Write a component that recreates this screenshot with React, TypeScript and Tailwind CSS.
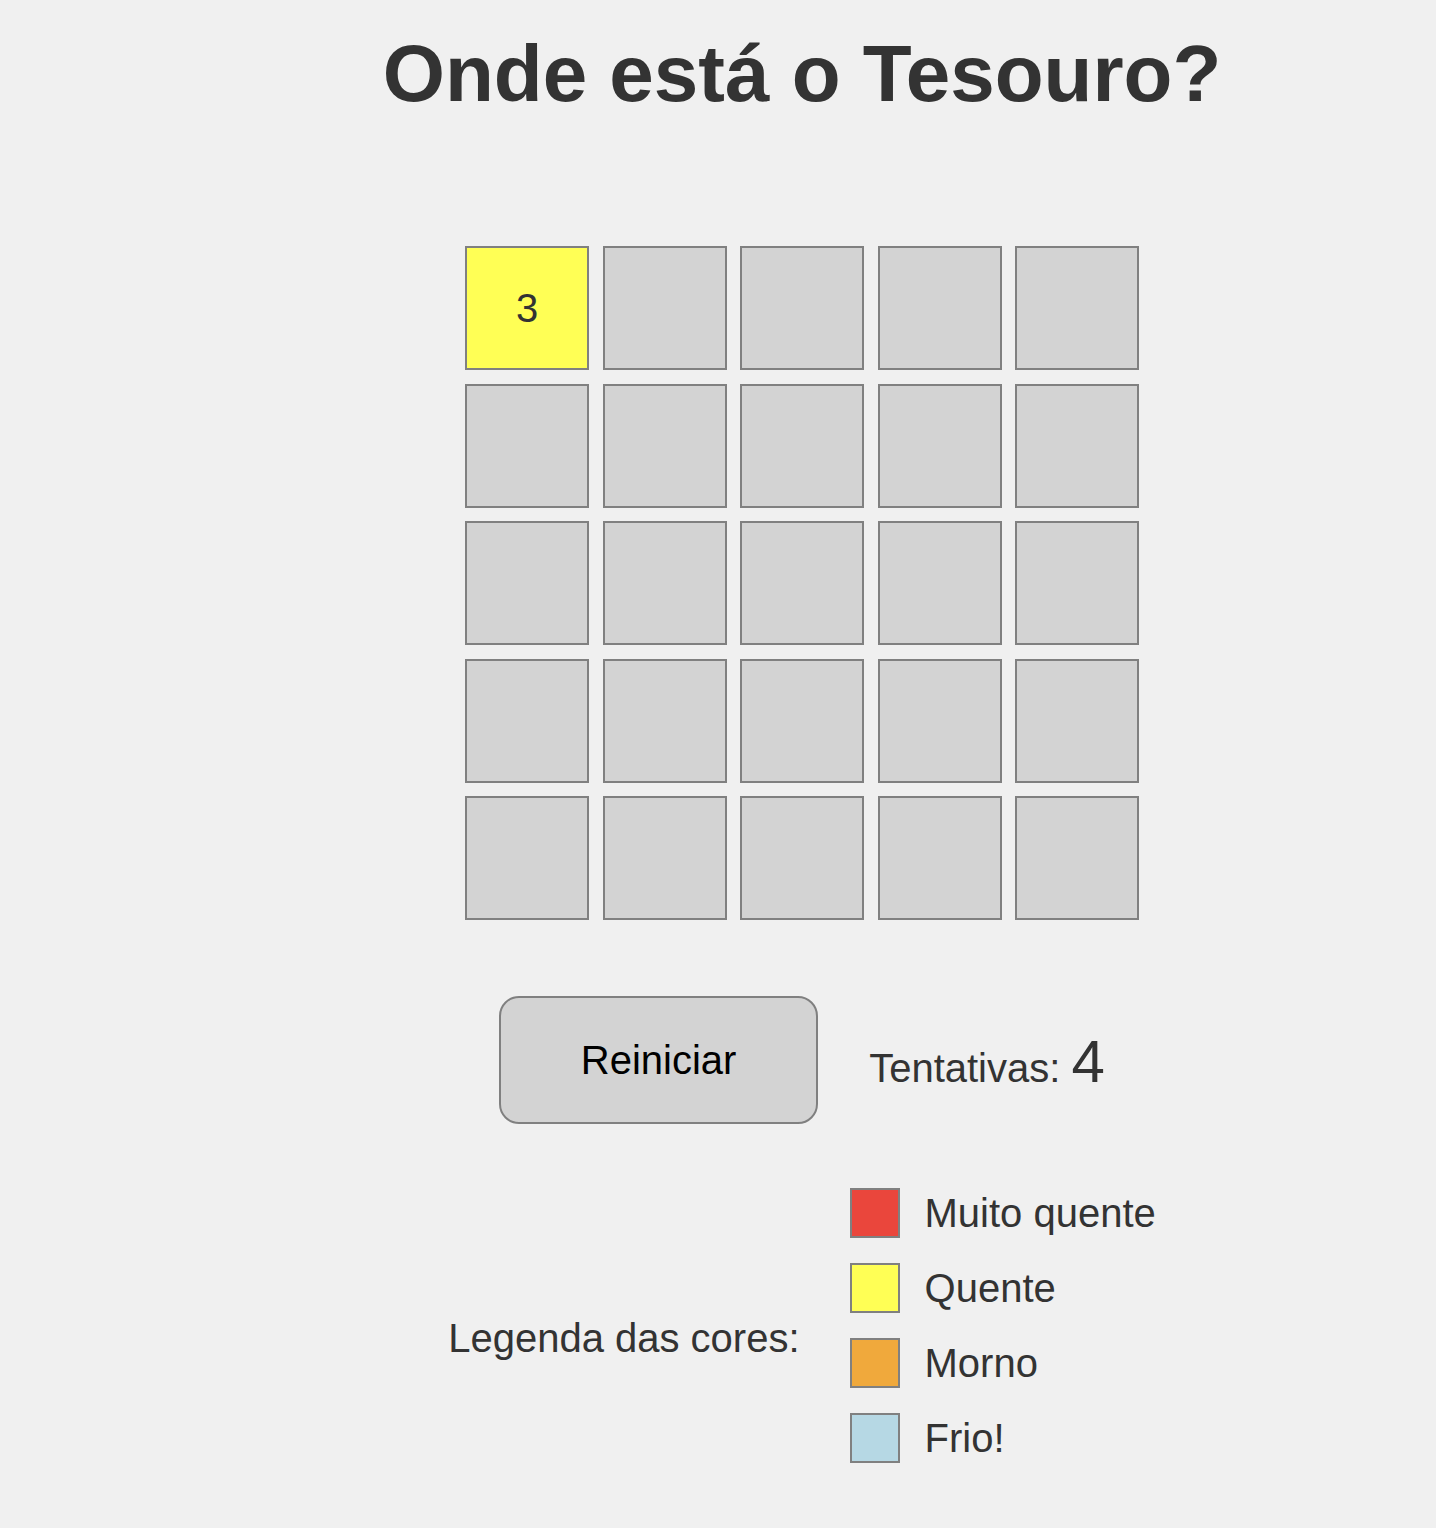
import { useState } from 'react';

const SIZE = 5;

const LEGEND = [
  { label: 'Muito quente', color: 'bg-[#ea463c]' },
  { label: 'Quente', color: 'bg-[#ffff55]' },
  { label: 'Morno', color: 'bg-[#f0a93c]' },
  { label: 'Frio!', color: 'bg-[#b6d8e4]' },
];

export default function App() {
  const [revealed] = useState<Record<number, number>>({ 0: 3 });
  const [attempts] = useState(4);

  return (
    <div className="min-h-screen w-full bg-[#f0f0f0] text-[#333] font-['Liberation_Sans',Arial,sans-serif]">
      <div className="flex flex-col items-center pl-[168px]">
        <h1 className="mt-[14px] text-[80px] font-bold">Onde está o Tesouro?</h1>

        <div className="mt-[112px] grid grid-cols-5 gap-[13.5px]">
          {Array.from({ length: SIZE * SIZE }, (_, i) => (
            <div
              key={i}
              className={`flex h-[124px] w-[124px] items-center justify-center border-2 border-[#808080] text-[40px] ${
                revealed[i] !== undefined ? 'bg-[#ffff55]' : 'bg-[#d3d3d3]'
              }`}
            >
              {revealed[i]}
            </div>
          ))}
        </div>

        <div className="mt-[76px] flex items-center gap-[51px]">
          <button className="h-[128px] w-[319px] rounded-[20px] border-2 border-[#808080] bg-[#d3d3d3] text-[40px] text-black">
            Reiniciar
          </button>
          <p className="mt-[3px] text-[40px]">
            Tentativas: <span className="text-[60px]">{attempts}</span>
          </p>
        </div>

        <div className="mt-[64px] flex items-center gap-[50px]">
          <p className="pt-[24px] text-[40px]">Legenda das cores:</p>
          <ul className="flex flex-col gap-[25px]">
            {LEGEND.map(({ label, color }) => (
              <li key={label} className="flex items-center gap-[25px]">
                <span className={`h-[50px] w-[50px] border-2 border-[#808080] ${color}`} />
                <span className="text-[40px] leading-[50px]">{label}</span>
              </li>
            ))}
          </ul>
        </div>
      </div>
    </div>
  );
}
